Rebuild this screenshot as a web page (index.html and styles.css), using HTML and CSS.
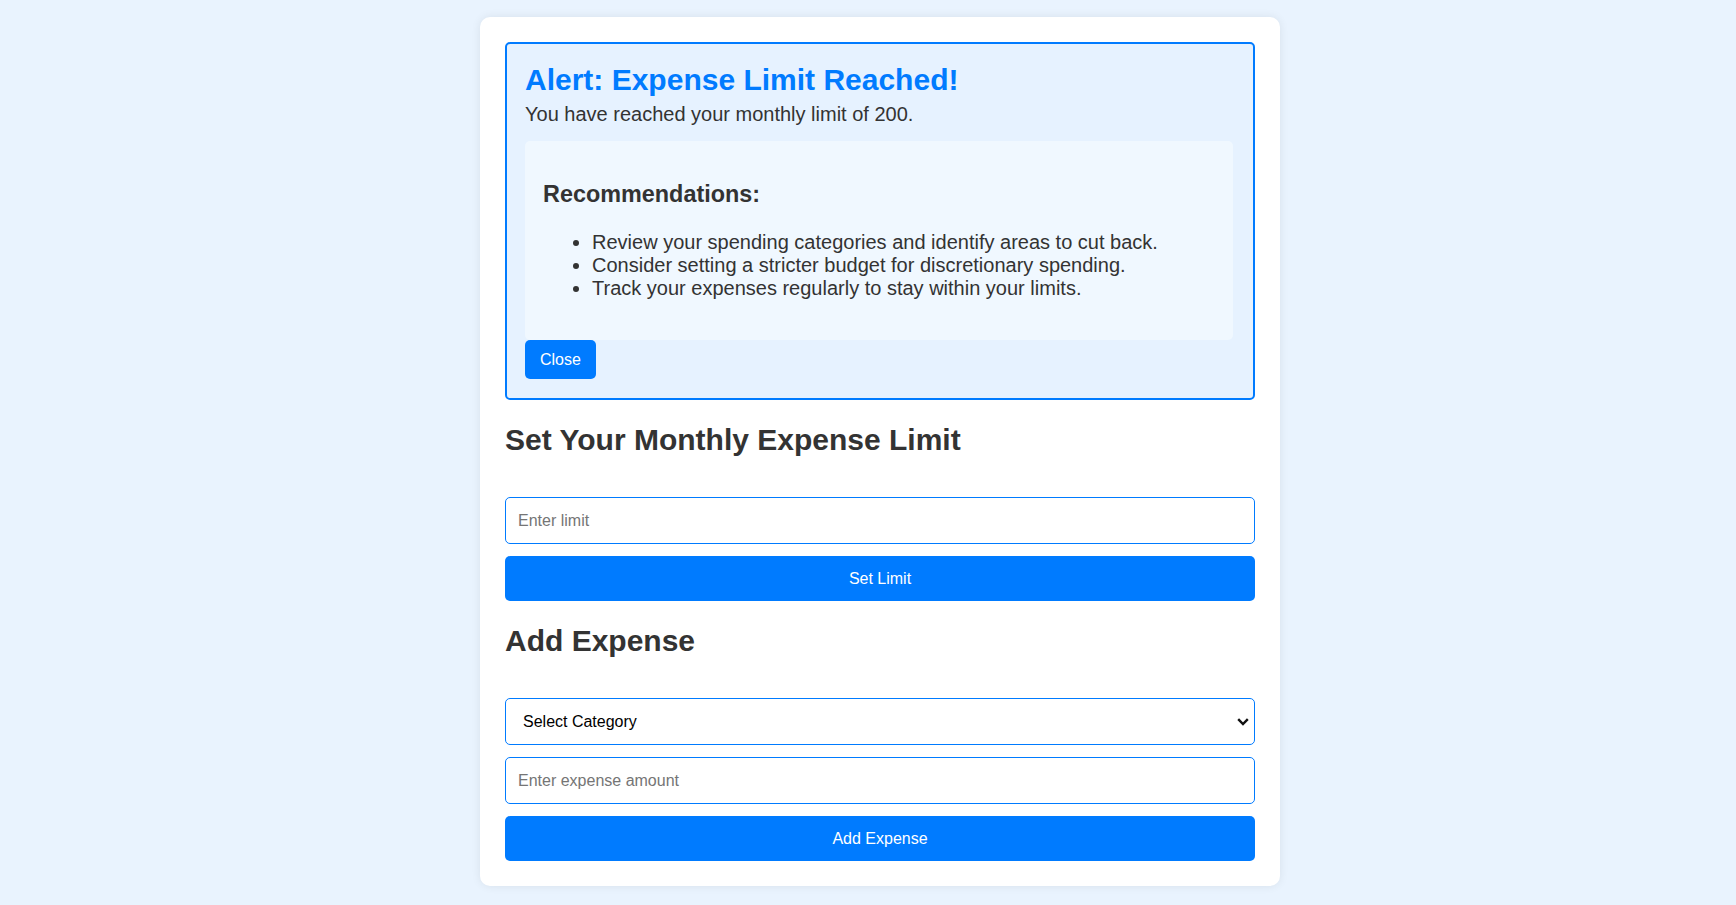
FILE: index.html
```html
<!DOCTYPE html>
<html lang="en">
<head>
<meta charset="UTF-8">
<title>Expense Tracker</title>
<link rel="stylesheet" href="styles.css">
</head>
<body>
<div class="card">
  <div class="alert">
    <h2 class="alert-title">Alert: Expense Limit Reached!</h2>
    <p class="alert-text">You have reached your monthly limit of 200.</p>
    <div class="recs">
      <h3 class="recs-title">Recommendations:</h3>
      <ul class="recs-list">
        <li>Review your spending categories and identify areas to cut back.</li>
        <li>Consider setting a stricter budget for discretionary spending.</li>
        <li>Track your expenses regularly to stay within your limits.</li>
      </ul>
    </div>
    <button class="close-btn">Close</button>
  </div>

  <h2 class="section-title">Set Your Monthly Expense Limit</h2>
  <input class="field" type="number" placeholder="Enter limit">
  <button class="primary-btn">Set Limit</button>

  <h2 class="section-title">Add Expense</h2>
  <div class="select-wrap">
    <select class="field select">
      <option>Select Category</option>
      <option>Food</option>
      <option>Transport</option>
      <option>Entertainment</option>
    </select>
    <svg class="chevron" width="12" height="8" viewBox="0 0 12 8" aria-hidden="true">
      <path d="M1.2 1.2 L6 6 L10.8 1.2" fill="none" stroke="#111" stroke-width="2.4"/>
    </svg>
  </div>
  <input class="field" type="number" placeholder="Enter expense amount">
  <button class="primary-btn">Add Expense</button>
</div>
</body>
</html>
```

FILE: styles.css
```css
html, body {
  margin: 0;
  padding: 0;
}

body {
  background: #e9f3fe;
  font-family: "Liberation Sans", Arial, sans-serif;
  font-size: 20px;
  color: #333;
  padding: 17px 0 16px 24px;
}

.card {
  width: 800px;
  box-sizing: border-box;
  margin: 0 auto;
  background: #fff;
  border-radius: 10px;
  box-shadow: 0 0 10px rgba(0, 0, 0, 0.08);
  padding: 25px;
  display: flow-root;
}

.alert {
  border: 2px solid #007bff;
  border-radius: 5px;
  background: #e6f2ff;
  padding: 19px 20px 19px 18px;
}

.alert-title {
  margin: 0 0 6px;
  font-size: 30px;
  font-weight: bold;
  color: #007bff;
}

.alert-text {
  margin: 0 0 15px;
  font-size: 20px;
}

.recs {
  background: #f0f8ff;
  border-radius: 5px;
  padding: 20px 18px;
  display: flow-root;
}

.recs-title {
  margin: 20px 0 23px;
  font-size: 23.4px;
  font-weight: bold;
}

.recs-list {
  margin: 0 0 20px;
  padding-left: 49px;
  font-size: 20px;
}

.close-btn {
  display: block;
  height: 39px;
  padding: 0 15px;
  border: none;
  border-radius: 5px;
  background: #007bff;
  color: #fff;
  font-family: "Liberation Sans", Arial, sans-serif;
  font-size: 16px;
}

.section-title {
  margin: 23px 0 40px;
  font-size: 30px;
  font-weight: bold;
  color: #333;
}

.field {
  display: block;
  width: 100%;
  box-sizing: border-box;
  height: 47px;
  margin: 0 0 12px;
  padding: 0 12px;
  border: 1px solid #007bff;
  border-radius: 5px;
  background: #fff;
  font-family: "Liberation Sans", Arial, sans-serif;
  font-size: 16px;
  color: #000;
}

.field::placeholder {
  color: #757575;
}

.select-wrap {
  position: relative;
}

.select {
  appearance: none;
  -webkit-appearance: none;
  padding: 0 30px 0 17px;
}

.chevron {
  position: absolute;
  right: 6px;
  top: 20px;
  pointer-events: none;
}

.primary-btn {
  display: block;
  width: 100%;
  height: 45px;
  border: none;
  border-radius: 5px;
  background: #007bff;
  color: #fff;
  font-family: "Liberation Sans", Arial, sans-serif;
  font-size: 16px;
}
```
